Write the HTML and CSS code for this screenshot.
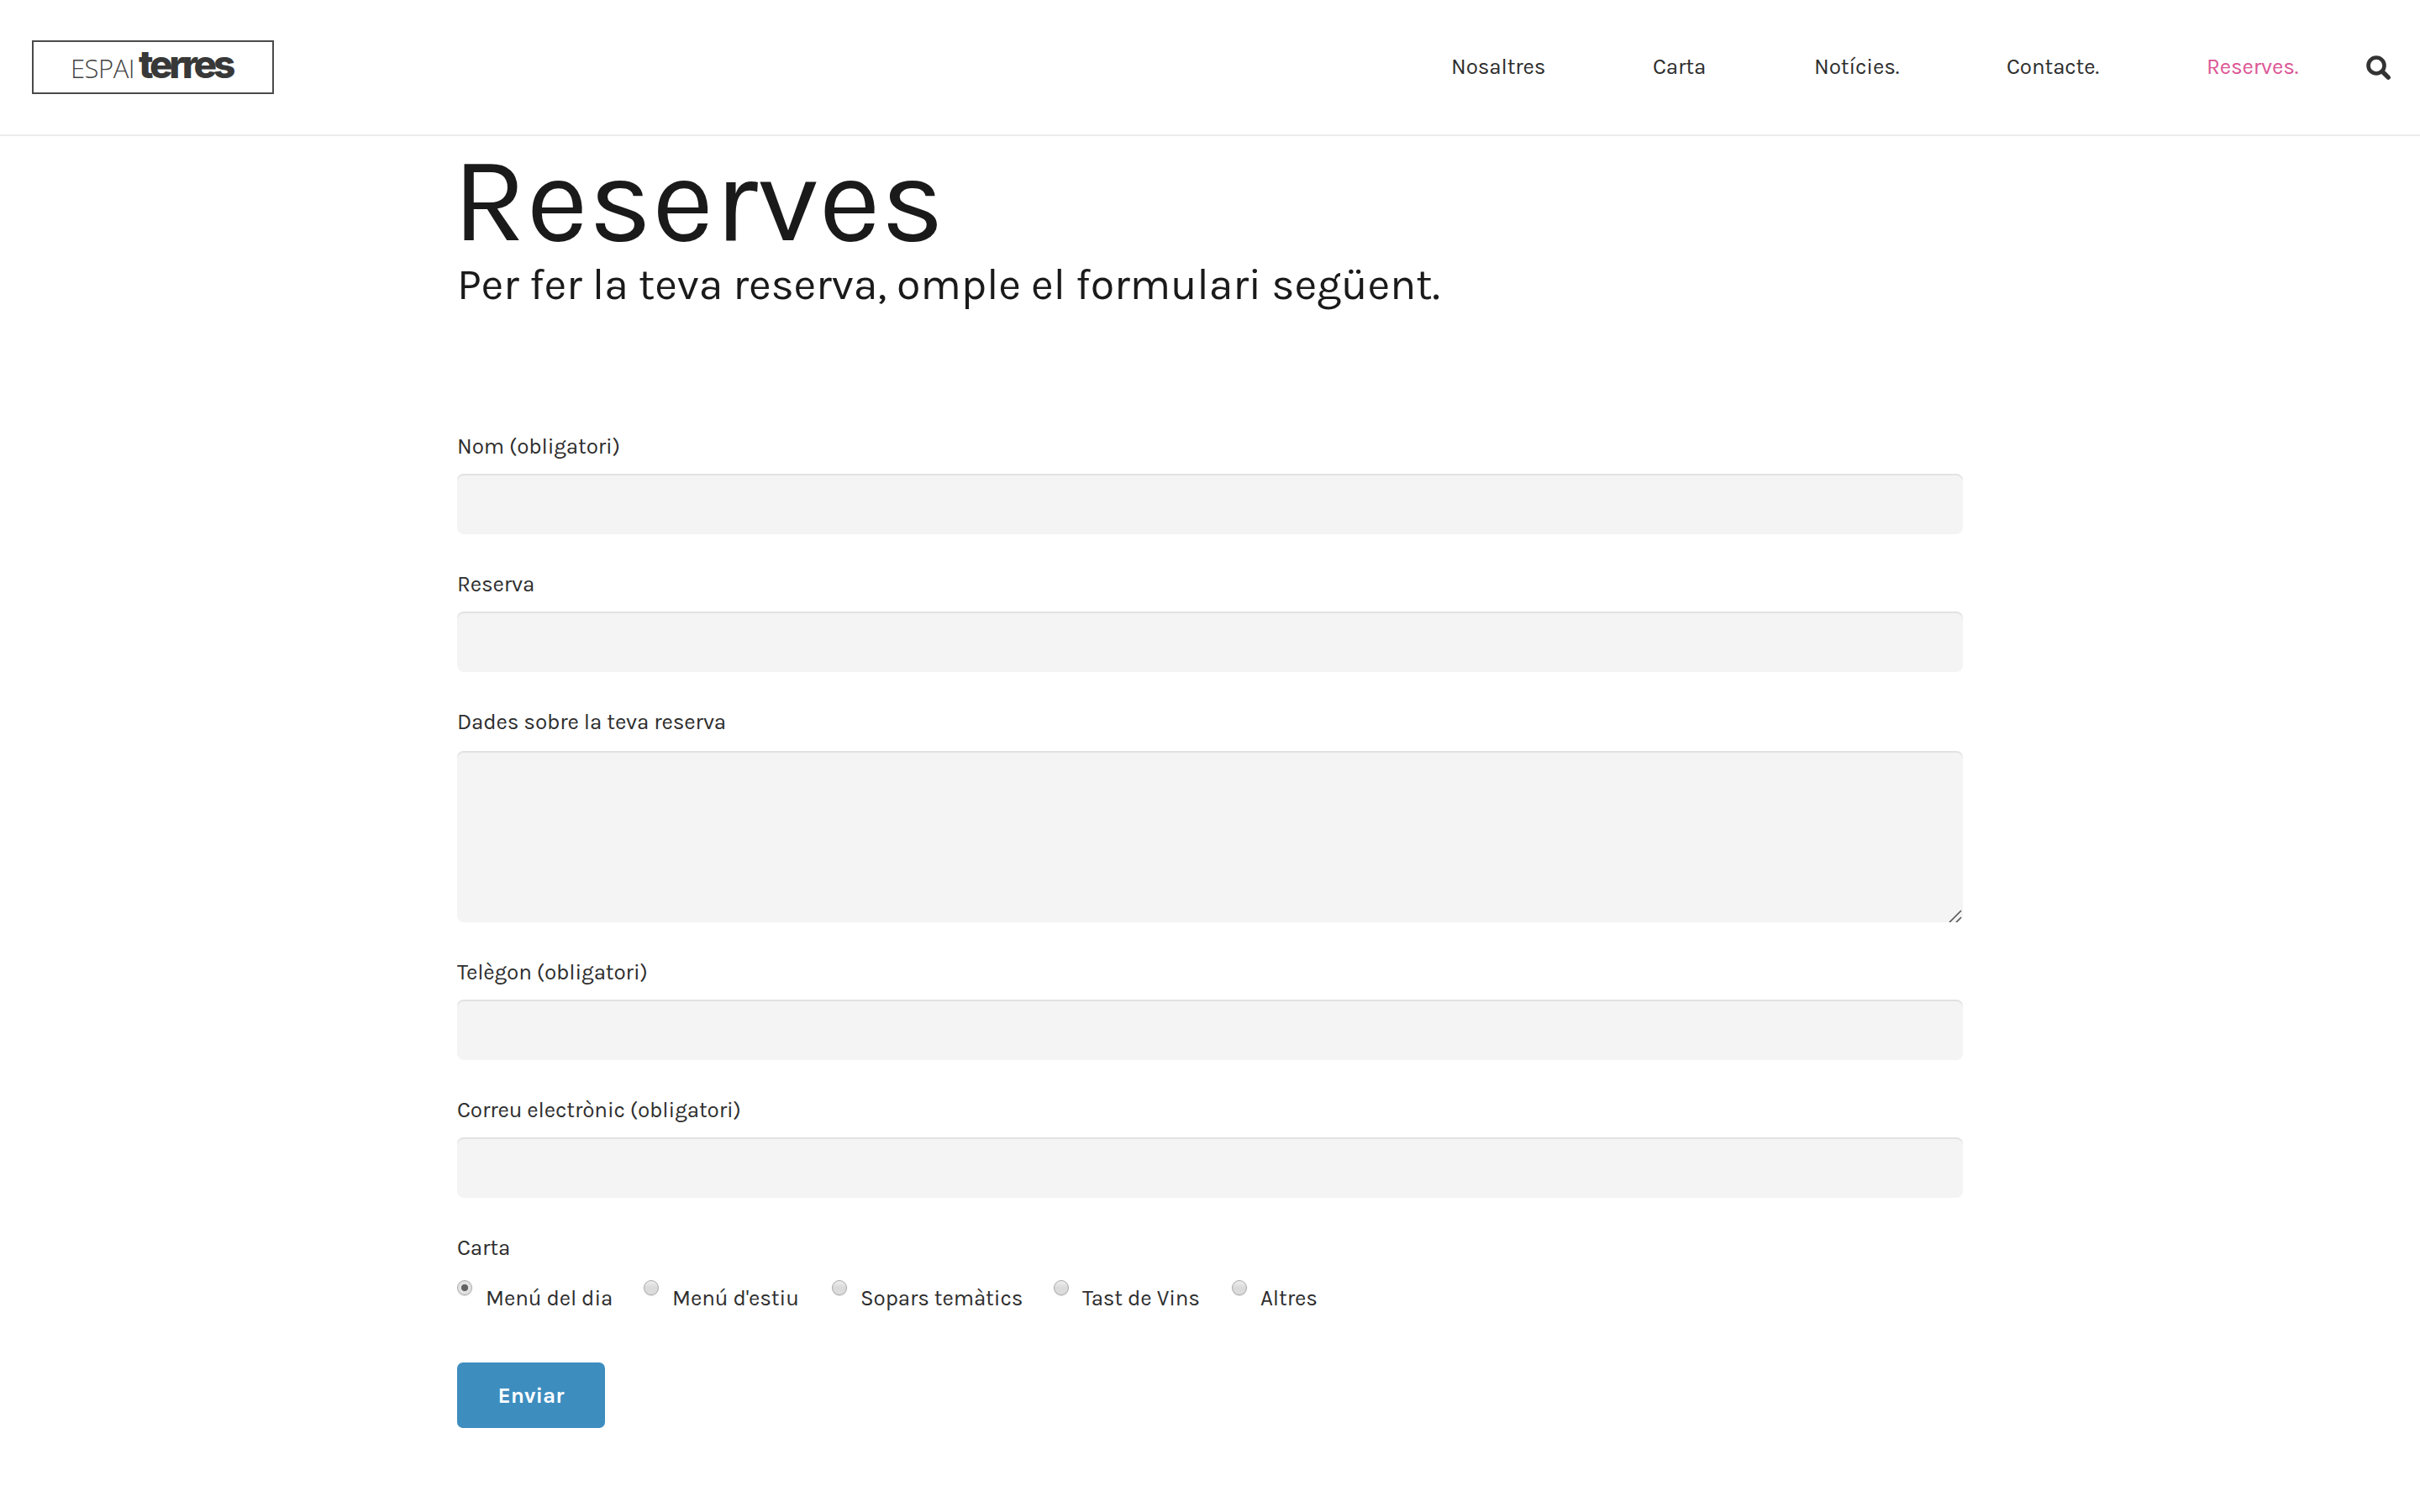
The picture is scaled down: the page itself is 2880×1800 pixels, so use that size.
FILE: index.html
```html
<!DOCTYPE html>
<html lang="ca">
<head>
    <meta charset="UTF-8">
    <meta name="viewport" content="width=device-width, initial-scale=1.0">
    <title>Reserves - Espai Terres</title>
    <link rel="stylesheet" href="styles.css">
</head>
<body>
    <header class="site-header">
        <a class="logo" href="#"><span class="logo-espai">ESPAI</span><span class="logo-terres">terres</span></a>
        <nav class="main-nav">
            <a href="#">Nosaltres</a>
            <a href="#">Carta</a>
            <a href="#">Notícies.</a>
            <a href="#">Contacte.</a>
            <a href="#" class="active">Reserves.</a>
        </nav>
        <a class="search" href="#" aria-label="Cerca">
            <svg width="30" height="30" viewBox="0 0 30 30" fill="none" stroke="#333" stroke-linecap="round">
                <circle cx="12" cy="12" r="9.5" stroke-width="4.6"/>
                <path d="M19.5 19.5L26.2 26.2" stroke-width="5.4"/>
            </svg>
        </a>
    </header>

    <main class="container">
        <h1>Reserves</h1>
        <h2>Per fer la teva reserva, omple el formulari següent.</h2>

        <form class="reserves-form">
            <div class="field">
                <label for="nom">Nom (obligatori)</label>
                <input type="text" id="nom">
            </div>
            <div class="field">
                <label for="reserva">Reserva</label>
                <input type="text" id="reserva">
            </div>
            <div class="field field-area">
                <label for="dades">Dades sobre la teva reserva</label>
                <textarea id="dades"></textarea>
                <svg class="grip" width="16" height="16" viewBox="0 0 16 16" stroke="#555" stroke-width="1.6">
                    <path d="M1 16L15 2M9 16L15 10"/>
                </svg>
            </div>
            <div class="field">
                <label for="telefon">Telègon (obligatori)</label>
                <input type="tel" id="telefon">
            </div>
            <div class="field">
                <label for="correu">Correu electrònic (obligatori)</label>
                <input type="email" id="correu">
            </div>

            <div class="field-carta">
                <span class="field-title">Carta</span>
                <div class="opcions">
                    <label><input type="radio" name="carta" checked><span>Menú del dia</span></label>
                    <label><input type="radio" name="carta"><span>Menú d'estiu</span></label>
                    <label><input type="radio" name="carta"><span>Sopars temàtics</span></label>
                    <label><input type="radio" name="carta"><span>Tast de Vins</span></label>
                    <label><input type="radio" name="carta"><span>Altres</span></label>
                </div>
            </div>

            <button type="submit">Enviar</button>
        </form>
    </main>
</body>
</html>
```
FILE: styles.css
```css
* {
    margin: 0;
    padding: 0;
    box-sizing: border-box;
}

body {
    font-family: Karla, Roboto, "Liberation Sans", sans-serif;
    font-size: 26px;
    line-height: 40px;
    letter-spacing: -0.12px;
    color: #2e2e2e;
    background-color: #fff;
}

a {
    color: inherit;
    text-decoration: none;
}

/* Header */
.site-header {
    display: flex;
    align-items: center;
    height: 162px;
    padding: 0 34px 0 38px;
    border-bottom: 2px solid #ebebeb;
}

.logo {
    display: flex;
    align-items: baseline;
    width: 288px;
    height: 64px;
    padding-left: 44px;
    border: 2px solid #4a4a4a;
    line-height: 52px;
}

.logo-espai {
    width: 81px;
    font-family: "Open Sans", sans-serif;
    font-size: 31px;
    font-weight: 300;
    letter-spacing: -0.5px;
    color: #444;
}

.logo-terres {
    font-family: Inter, sans-serif;
    font-size: 46px;
    font-weight: 800;
    letter-spacing: -4.2px;
    color: #383838;
}

.main-nav {
    display: grid;
    grid-template-columns: 240px 192px 229px 238px 110px;
    margin-left: auto;
}

.main-nav .active {
    color: #dc5595;
}

.search {
    display: flex;
    margin-left: 80px;
    padding-top: 2px;
}

/* Content */
.container {
    width: 1792px;
    margin: 0 auto;
    padding-top: 7px;
}

h1,
h2 {
    font-weight: 400;
    color: #1a1a1a;
}

h1 {
    margin-left: -6px;
    font-size: 144px;
    line-height: 138px;
    letter-spacing: 0;
}

h2 {
    margin-bottom: 141px;
    font-size: 52px;
    line-height: 64px;
    letter-spacing: -0.18px;
}

/* Form */
.field {
    position: relative;
    margin-bottom: 40px;
}

.field label {
    display: block;
    margin-bottom: 12px;
}

.field-area label {
    margin-bottom: 14px;
}

.field input,
.field textarea {
    display: block;
    width: 100%;
    height: 72px;
    padding: 0 24px;
    border: none;
    border-radius: 8px;
    background-color: #f4f4f4;
    box-shadow: inset 0 2px 0 #e2e2e2;
    font: inherit;
    color: inherit;
}

.field textarea {
    height: 204px;
    resize: none;
}

.grip {
    position: absolute;
    right: 1px;
    bottom: 0;
}

.field-title {
    display: block;
    margin-bottom: 18px;
}

.opcions {
    display: grid;
    grid-template-columns: 222px 224px 264px 212px auto;
    margin-bottom: 56px;
}

.opcions label {
    display: flex;
    align-items: flex-start;
    gap: 16px;
    white-space: nowrap;
}

.opcions span {
    padding-top: 2px;
}

.opcions input {
    appearance: none;
    width: 18px;
    height: 18px;
    border: 1.5px solid #aaa;
    border-radius: 50%;
    background: linear-gradient(#eee, #dadada 50%, #dedede);
    box-shadow: 0 1px 1px rgba(0,0,0,0.15);
}

.opcions input:checked {
    background: radial-gradient(circle, #636363 3.7px, #e2e2e2 4.5px);
}

button {
    display: block;
    width: 176px;
    height: 78px;
    border: none;
    border-radius: 7px;
    background-color: #3d8dbf;
    color: #fff;
    font-family: inherit;
    font-size: 26px;
    font-weight: 700;
}
```
